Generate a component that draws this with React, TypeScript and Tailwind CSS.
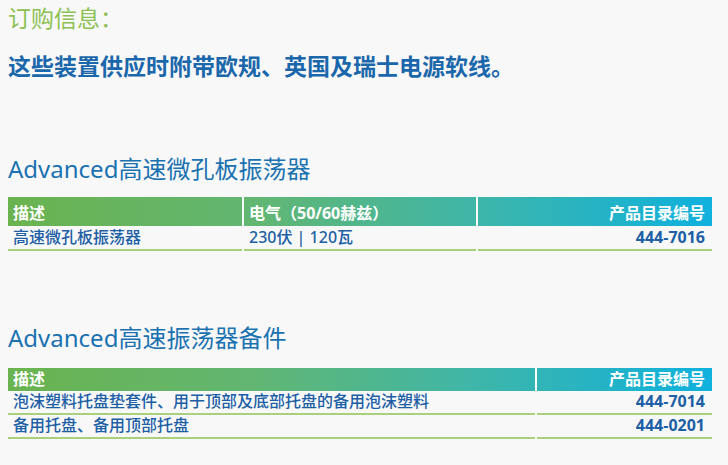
import React from "react";

const font = "font-['Noto_Sans','Noto_Sans_CJK_SC',sans-serif]";

interface Row {
  cells: string[];
}

const headerBg = "bg-[linear-gradient(90deg,#6ab34f_0%,#62b672_35%,#40b6a6_65%,#0fb1de_100%)]";

const OrderTable = ({
  heads,
  rows,
  cols,
  headH,
  rowH,
}: {
  heads: string[];
  rows: Row[];
  cols: string;
  headH: string;
  rowH: string;
}) => (
  <div className="mx-2 w-[704px]">
    <div className={`grid ${cols} ${headH} ${headerBg}`}>
      {heads.map((h, i) => (
        <div
          key={h}
          className={`flex items-end pb-[2px] px-[5px] text-[16px] font-bold leading-[22px] text-white ${
            i > 0 ? "border-l-2 border-[#f8f8f8]" : ""
          } ${i === heads.length - 1 ? "justify-end pr-[7px]" : ""}`}
        >
          {h}
        </div>
      ))}
    </div>
    {rows.map((r, ri) => (
      <div key={ri} className={`grid ${cols}`}>
        {r.cells.map((c, i) => (
          <div
            key={i}
            className={`flex ${rowH} items-end pb-[1px] border-b-2 border-[#a9d07c] text-[16px] leading-[22px] text-[#1c5fa5] ${
              i > 0 ? "ml-[2px]" : ""
            } ${
              i === r.cells.length - 1
                ? "justify-end pr-[7px] font-bold"
                : "px-[5px] font-medium"
            }`}
          >
            {c}
          </div>
        ))}
      </div>
    ))}
  </div>
);

export default function App() {
  return (
    <div className={`min-h-screen w-[728px] bg-[#f8f8f8] ${font}`}>
      <div className="px-2 pt-[3px]">
        <h2 className="text-[23px] leading-[30px] font-normal text-[#8cc152]">订购信息：</h2>
        <p className="mt-[18px] text-[23px] leading-[30px] font-bold text-[#1b67ab]">
          这些装置供应时附带欧规、英国及瑞士电源软线。
        </p>
        <h3 className="mt-[72px] text-[24px] leading-[32px] font-normal text-[#1a72b1]">
          Advanced高速微孔板振荡器
        </h3>
      </div>
      <div className="mt-[12px]">
        <OrderTable
          cols="grid-cols-[234px_234px_236px]"
          headH="h-[29px]"
          rowH="h-[25px]"
          heads={["描述", "电气（50/60赫兹）", "产品目录编号"]}
          rows={[{ cells: ["高速微孔板振荡器", "230伏 | 120瓦", "444-7016"] }]}
        />
      </div>
      <div className="px-2">
        <h3 className="mt-[71px] text-[24px] leading-[32px] font-normal text-[#1a72b1]">
          Advanced高速振荡器备件
        </h3>
      </div>
      <div className="mt-[14px]">
        <OrderTable
          cols="grid-cols-[527px_177px]"
          headH="h-[23px]"
          rowH="h-[24px]"
          heads={["描述", "产品目录编号"]}
          rows={[
            { cells: ["泡沫塑料托盘垫套件、用于顶部及底部托盘的备用泡沫塑料", "444-7014"] },
            { cells: ["备用托盘、备用顶部托盘", "444-0201"] },
          ]}
        />
      </div>
    </div>
  );
}
